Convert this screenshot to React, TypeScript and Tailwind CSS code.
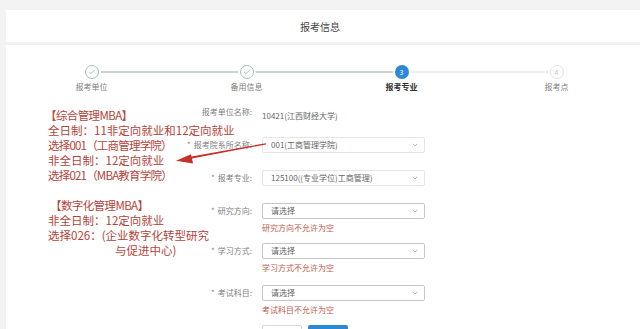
import { Check, ChevronDown } from 'lucide-react'

type Step = { label: string; state: 'done' | 'active' | 'todo'; num: number }

const STEPS: Step[] = [
  { label: '报考单位', state: 'done', num: 1 },
  { label: '备用信息', state: 'done', num: 2 },
  { label: '报考专业', state: 'active', num: 3 },
  { label: '报考点', state: 'todo', num: 4 },
]

function StepCircle({ step }: { step: Step }) {
  if (step.state === 'done') {
    return (
      <div className="flex h-[14px] w-[14px] items-center justify-center rounded-full border border-[#a9c4bc] bg-white">
        <Check className="size-[8px] text-[#8fb0a6]" strokeWidth={2.5} />
      </div>
    )
  }
  if (step.state === 'active') {
    return (
      <div className="flex h-[14px] w-[14px] items-center justify-center rounded-full bg-[#2b8ad3] text-[7px] leading-none text-white">
        {step.num}
      </div>
    )
  }
  return (
    <div className="flex h-[14px] w-[14px] items-center justify-center rounded-full border border-[#e2e2e2] bg-white text-[7px] leading-none text-[#c4c4c4]">
      {step.num}
    </div>
  )
}

function Steps() {
  return (
    <div className="ml-[8px] grid w-[620px] grid-cols-4 pt-[20px]">
      {STEPS.map((step, i) => (
        <div key={step.label} className="relative flex flex-col items-center">
          {i < STEPS.length - 1 && (
            <div
              className={
                i < 2
                  ? 'absolute top-[6px] left-[calc(50%+9px)] h-[2px] w-[137px] bg-[#c8d3d0]'
                  : 'absolute top-[6px] left-[calc(50%+9px)] h-[2px] w-[137px] bg-[#efefef]'
              }
            />
          )}
          <StepCircle step={step} />
          <div
            className={
              step.state === 'active'
                ? 'mt-[3px] text-[8px] leading-[10px] font-semibold text-[#333]'
                : 'mt-[3px] text-[8px] leading-[10px] text-[#808080]'
            }
          >
            {step.label}
          </div>
        </div>
      ))}
    </div>
  )
}

function Select({ value, faint }: { value: string; faint?: boolean }) {
  return (
    <div
      className={
        faint
          ? 'flex h-[16px] w-[163px] items-center justify-between rounded-[2px] border border-[#e6e6e6] bg-white pr-[5px] pl-[8px]'
          : 'flex h-[16px] w-[163px] items-center justify-between rounded-[2px] border border-[#c6c6c6] bg-white pr-[5px] pl-[8px]'
      }
    >
      <span className="text-[8px] leading-none text-[#666]">{value}</span>
      <ChevronDown className="size-[8px] text-[#999]" strokeWidth={2} />
    </div>
  )
}

function Row({ label, required, children }: { label: string; required?: boolean; children: React.ReactNode }) {
  return (
    <div className="flex h-[16px] items-center">
      <div className="w-[250px] pr-[4px] text-right text-[8px] leading-none text-[#808080]">
        {required && <span className="mr-[3px] text-[#888]">*</span>}
        {label}
      </div>
      <div className="ml-[6px]">{children}</div>
    </div>
  )
}

function ErrorText({ children }: { children: React.ReactNode }) {
  return <div className="mt-[4px] ml-[256px] h-[10px] text-[8px] leading-[10px] text-[#c05a4e]">{children}</div>
}

// red notes pasted over the form
function Annotation() {
  return (
    <div className="absolute top-[63px] left-[42px] text-[11.5px] leading-[15px] text-[#b3443b]">
      <div className="-ml-[3px] tracking-[-0.6px]">【综合管理MBA】</div>
      <div>全日制：11非定向就业和12定向就业</div>
      <div className="tracking-[-0.8px]">选择001（工商管理学院）</div>
      <div>非全日制：12定向就业</div>
      <div className="tracking-[-0.8px]">选择021（MBA教育学院）</div>
      <div className="mt-[15px] ml-[2px] tracking-[-0.6px]">【数字化管理MBA】</div>
      <div>非全日制：12定向就业</div>
      <div>选择026：(企业数字化转型研究</div>
      <div className="ml-[67px]">与促进中心)</div>
    </div>
  )
}

function Arrow() {
  return (
    <svg className="pointer-events-none absolute top-0 left-0" width="640" height="329" viewBox="0 0 640 329">
      <polygon points="266,143.2 266,144.4 192,158.6 193,163.5 176,160.8 191,154.2 191.5,156.4" fill="#c8302a" />
    </svg>
  )
}

export default function App() {
  return (
    <div className="relative h-[329px] w-[640px] overflow-hidden bg-[#f3f3f3] pt-[10px] pl-[6px] font-['Noto_Sans_CJK_SC',sans-serif]">
      <div className="flex h-[32px] items-center justify-center bg-white">
        <span className="-ml-[6px] text-[10px] text-[#444]">报考信息</span>
      </div>
      <div className="relative mt-[3px] h-[300px] bg-white">
        <Steps />
        <div className="mt-[12px] flex flex-col">
          <Row label="报考单位名称:">
            <span className="text-[8px] leading-none text-[#666]">10421(江西财经大学)</span>
          </Row>
          <div className="mt-[17px]">
            <Row label="报考院系所名称:" required>
              <Select value="001(工商管理学院)" faint />
            </Row>
          </div>
          <div className="mt-[17px]">
            <Row label="报考专业:" required>
              <Select value="125100((专业学位)工商管理)" faint />
            </Row>
          </div>
          <div className="mt-[17px]">
            <Row label="研究方向:" required>
              <Select value="请选择" />
            </Row>
            <ErrorText>研究方向不允许为空</ErrorText>
          </div>
          <div className="mt-[10px]">
            <Row label="学习方式:" required>
              <Select value="请选择" />
            </Row>
            <ErrorText>学习方式不允许为空</ErrorText>
          </div>
          <div className="mt-[12px]">
            <Row label="考试科目:" required>
              <Select value="请选择" />
            </Row>
            <ErrorText>考试科目不允许为空</ErrorText>
          </div>
          <div className="mt-[10px] ml-[256px] flex gap-[6px]">
            <div className="h-[20px] w-[40px] rounded-[2px] border border-[#d6d6d6] bg-white" />
            <div className="h-[20px] w-[40px] rounded-[2px] bg-[#2b8ad3]" />
          </div>
        </div>
        <Annotation />
      </div>
      <Arrow />
    </div>
  )
}
